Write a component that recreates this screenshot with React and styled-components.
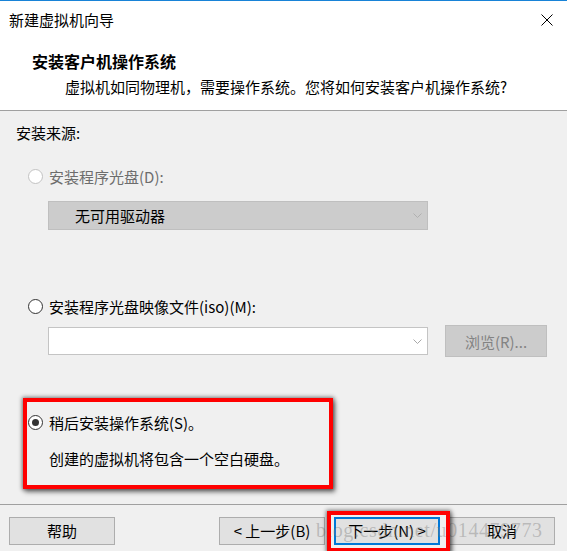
import React from 'react';
import styled, { createGlobalStyle, css } from 'styled-components';

const Global = createGlobalStyle`
  html, body { margin: 0; padding: 0; background: #f0f0f0; }
  body {
    font-family: "Noto Sans CJK SC", "Noto Sans", sans-serif;
    font-size: 15px;
    color: #000;
  }
`;

const Window = styled.div`
  position: relative;
  width: 567px;
  height: 551px;
  box-sizing: border-box;
  border-top: 1px solid #1883d7;
  display: flex;
  flex-direction: column;
  background: #f0f0f0;
  overflow: hidden;
`;

const Header = styled.header`
  height: 110px;
  box-sizing: border-box;
  background: #fff;
  border-bottom: 1px solid #a0a0a0;
  display: flex;
  flex-direction: column;
`;

const TitleBar = styled.div`
  height: 38px;
  display: flex;
  align-items: center;
  justify-content: space-between;
  padding: 0 14px 0 9px;
`;

const Title = styled.span`
  font-size: 15px;
  line-height: 20px;
`;

const CloseIcon = styled.svg`
  width: 12px;
  height: 12px;
  display: block;
`;

const Heading = styled.div`
  margin-top: 12px;
  padding-left: 32px;
  font-size: 16px;
  font-weight: 700;
  line-height: 20px;
`;

const Subtitle = styled.div`
  margin-top: 6px;
  padding-left: 65px;
  font-size: 15px;
  line-height: 20px;
`;

const Content = styled.main`
  flex: 1;
  display: flex;
  flex-direction: column;
  padding: 12px 0 0 16px;
`;

const Label = styled.div`
  line-height: 20px;
  margin-top: ${p => p.$mt || 0}px;
  padding-left: ${p => p.$pl || 0}px;
`;

const OptionGroup = styled.div`
  position: relative;
  display: flex;
  flex-direction: column;
`;

const Option = styled.div`
  display: flex;
  align-items: center;
  gap: 6px;
  height: 20px;
  margin-top: ${p => p.$mt}px;
  padding-left: 12px;
  color: ${p => (p.$disabled ? '#6d6d6d' : '#000')};
`;

const Radio = styled.span`
  width: 15px;
  height: 15px;
  box-sizing: border-box;
  border-radius: 50%;
  background: #fff;
  border: 1px solid ${p => (p.$disabled ? '#c2c2c2' : '#333')};
  display: flex;
  align-items: center;
  justify-content: center;
  ${p => p.$checked && css`
    &::after {
      content: '';
      width: 7px;
      height: 7px;
      border-radius: 50%;
      background: #333;
    }
  `}
`;

const Combo = styled.div`
  width: 380px;
  height: ${p => p.$h}px;
  box-sizing: border-box;
  display: flex;
  align-items: center;
  justify-content: space-between;
  background: ${p => (p.$disabled ? '#cccccc' : '#fff')};
  border: 1px solid ${p => (p.$disabled ? '#bfbfbf' : '#c4c4c4')};
  padding: 0 5px 0 26px;
  margin: ${p => p.$margin || 0};
`;

const ComboText = styled.span`
  line-height: 20px;
`;

const Chevron = styled.svg`
  width: 9px;
  height: 5px;
  display: block;
`;

const FileRow = styled.div`
  display: flex;
  align-items: center;
  gap: 17px;
  height: 32px;
  margin-top: 9px;
  padding-left: 32px;
`;

const BrowseButton = styled.div`
  width: 102px;
  height: 32px;
  box-sizing: border-box;
  display: flex;
  align-items: center;
  justify-content: center;
  background: #cccccc;
  border: 1px solid #bfbfbf;
  color: #838383;
`;

const Footer = styled.footer`
  height: 47px;
  box-sizing: border-box;
  border-top: 1px solid #a0a0a0;
  display: flex;
  align-items: flex-start;
  padding: 12px 12px 0 9px;
  gap: 9px;
`;

const Spacer = styled.div`
  flex: 1;
`;

const Button = styled.div`
  width: 106px;
  height: 28px;
  box-sizing: border-box;
  display: flex;
  align-items: center;
  justify-content: center;
  background: #e1e1e1;
  border: ${p => (p.$default ? '2px solid #0078d7' : '1px solid #adadad')};
  line-height: 20px;
`;

const Annotation = styled.div`
  position: absolute;
  box-sizing: border-box;
  border: 4px solid #ff0000;
  box-shadow: 0 0 4px 1px rgba(0, 0, 0, 0.45), 2px 3px 5px rgba(0, 0, 0, 0.45);
  z-index: 3;
  left: ${p => p.$x}px;
  top: ${p => p.$y}px;
  width: ${p => p.$w}px;
  height: ${p => p.$h}px;
`;

const Watermark = styled.div`
  position: absolute;
  left: 316px;
  top: 517px;
  font-family: "Liberation Serif", "DejaVu Serif", serif;
  font-size: 20px;
  line-height: 24px;
  letter-spacing: 0.6px;
  color: rgba(120, 120, 120, 0.38);
  white-space: nowrap;
  pointer-events: none;
  z-index: 2;
`;

const ChevronIcon = ({ color }) => (
  <Chevron viewBox="0 0 9 5">
    <polyline points="0.5,0.5 4.5,4.5 8.5,0.5" fill="none" stroke={color} strokeWidth="1" />
  </Chevron>
);

export default function App() {
  return (
    <>
      <Global />
      <Window>
        <Header>
          <TitleBar>
            <Title>新建虚拟机向导</Title>
            <CloseIcon viewBox="0 0 12 12">
              <line x1="0.5" y1="0.5" x2="11.5" y2="11.5" stroke="#000" strokeWidth="1" />
              <line x1="11.5" y1="0.5" x2="0.5" y2="11.5" stroke="#000" strokeWidth="1" />
            </CloseIcon>
          </TitleBar>
          <Heading>安装客户机操作系统</Heading>
          <Subtitle>虚拟机如同物理机，需要操作系统。您将如何安装客户机操作系统?</Subtitle>
        </Header>

        <Content>
          <Label>安装来源:</Label>

          <Option $mt={23} $disabled>
            <Radio $disabled />
            <span>安装程序光盘(D):</span>
          </Option>
          <Combo $disabled $h={29} $margin="15px 0 0 32px">
            <ComboText>无可用驱动器</ComboText>
            <ChevronIcon color="#b0b0b0" />
          </Combo>

          <Option $mt={66}>
            <Radio />
            <span>安装程序光盘映像文件(iso)(M):</span>
          </Option>
          <FileRow>
            <Combo $h={28}>
              <ComboText />
              <ChevronIcon color="#a8a8a8" />
            </Combo>
            <BrowseButton>浏览(R)...</BrowseButton>
          </FileRow>

          <OptionGroup>
            <Option $mt={55}>
              <Radio $checked />
              <span>稍后安装操作系统(S)。</span>
            </Option>
            <Label $mt={17} $pl={33}>创建的虚拟机将包含一个空白硬盘。</Label>
          </OptionGroup>
        </Content>

        <Footer>
          <Button>帮助</Button>
          <Spacer />
          <Button>&lt; 上一步(B)</Button>
          <Button $default>下一步(N) &gt;</Button>
          <Button>取消</Button>
        </Footer>

        <Watermark>blog.csdn.net/u014479773</Watermark>
        <Annotation $x={23} $y={397} $w={310} $h={91} />
        <Annotation $x={327} $y={510} $w={123} $h={41} />
      </Window>
    </>
  );
}
